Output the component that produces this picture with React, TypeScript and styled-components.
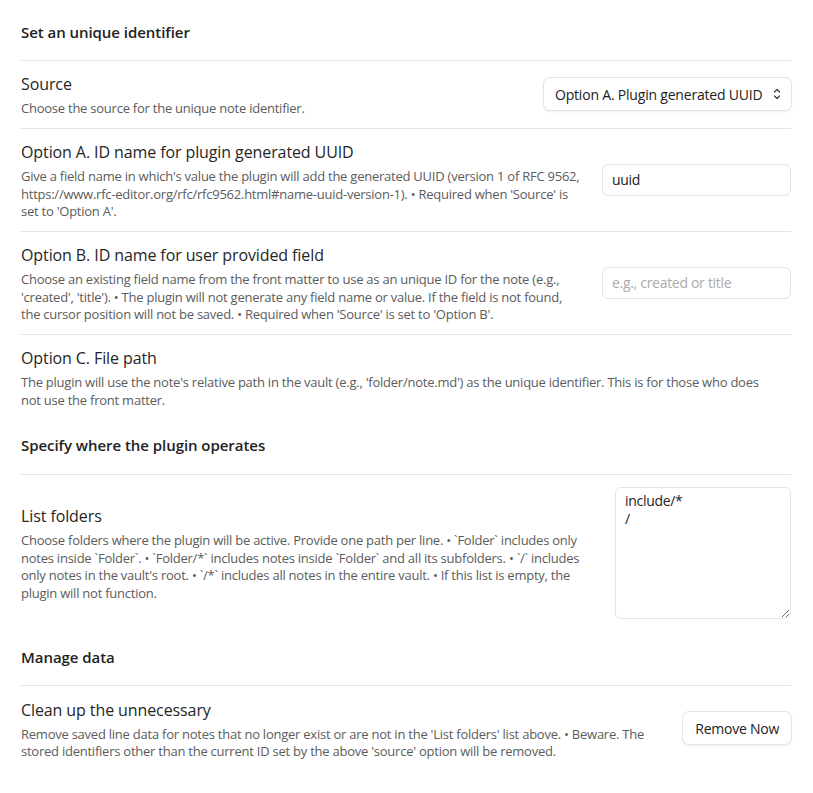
import React from "react";
import styled, { createGlobalStyle } from "styled-components";

const GlobalStyle = createGlobalStyle`
  html, body {
    margin: 0;
    padding: 0;
    background: #ffffff;
  }
  body {
    font-family: "Open Sans", "Noto Sans", "Liberation Sans", sans-serif;
    color: #222222;
    -webkit-font-smoothing: antialiased;
  }
  * { box-sizing: border-box; }
`;

const Page = styled.div`
  padding: 4px 22px 24px 21px;
  width: 813px;
`;

const Heading = styled.div<{ $first?: boolean }>`
  padding: ${(p) => (p.$first ? "18px 0 16px" : "16px 0 17px")};
  font-size: 15px;
  font-weight: 600;
  line-height: 21.5px;
  color: #222222;
  letter-spacing: -0.05px;
`;

const Row = styled.div`
  display: flex;
  align-items: center;
  padding: 12px 0;
  border-top: 1px solid #e3e3e3;
`;

const Info = styled.div<{ $full?: boolean }>`
  flex: 1 1 auto;
  min-width: 0;
  padding-top: 1.5px;
  margin-bottom: -2px;
  margin-right: ${(p) => (p.$full ? "0" : "20px")};
`;

const Name = styled.div`
  font-size: 16px;
  line-height: 21.5px;
  color: #262626;
  letter-spacing: -0.1px;
`;

const Desc = styled.div`
  padding-top: 4.5px;
  font-size: 13px;
  line-height: 17.5px;
  color: #5c5c5c;
  letter-spacing: -0.24px;
`;

const Line = styled.span`
  display: block;
  white-space: nowrap;
`;

const Control = styled.div`
  flex: 0 0 auto;
  display: flex;
  align-items: center;
  justify-content: flex-end;
`;

const SelectWrap = styled.div`
  position: relative;
  display: inline-flex;
`;

const Select = styled.select`
  appearance: none;
  -webkit-appearance: none;
  height: 32px;
  padding: 0 28px 0 11px;
  border: none;
  border-radius: 6px;
  background: #ffffff;
  color: #222222;
  font-family: inherit;
  font-size: 14px;
  letter-spacing: -0.2px;
  box-shadow: 0 0 0 1px #e4e4e4, 0 1px 2px rgba(0, 0, 0, 0.07),
    0 2px 4px rgba(0, 0, 0, 0.05);
  outline: none;
`;

const SelectArrow = styled.svg`
  position: absolute;
  right: 9px;
  top: 50%;
  transform: translateY(-50%);
  pointer-events: none;
`;

const TextInput = styled.input`
  width: 189px;
  height: 32px;
  padding: 0 9px;
  border: 1px solid #e3e3e3;
  border-radius: 6px;
  background: #ffffff;
  color: #222222;
  font-family: inherit;
  font-size: 14px;
  letter-spacing: -0.3px;
  outline: none;
  &::placeholder {
    color: #ababab;
  }
`;

const TextArea = styled.textarea`
  width: 176px;
  height: 132px;
  padding: 4px 9px;
  border: 1px solid #e3e3e3;
  border-radius: 6px;
  background: #ffffff;
  color: #222222;
  font-family: inherit;
  font-size: 14px;
  line-height: 18px;
  letter-spacing: -0.3px;
  outline: none;
  resize: both;
  display: block;
`;

const Button = styled.button`
  height: 32px;
  padding: 0 12px;
  border: none;
  border-radius: 6px;
  background: #ffffff;
  color: #222222;
  font-family: inherit;
  font-size: 14px;
  letter-spacing: -0.25px;
  cursor: pointer;
  box-shadow: 0 0 0 1px #e4e4e4, 0 1px 2px rgba(0, 0, 0, 0.07),
    0 2px 4px rgba(0, 0, 0, 0.05);
`;

type Setting = {
  name: string;
  lines: string[];
};

const Description = ({ lines }: { lines: string[] }) => (
  <Desc>
    {lines.map((l, i) => (
      <Line key={i}>{l}</Line>
    ))}
  </Desc>
);

const SettingInfo = ({ s, full }: { s: Setting; full?: boolean }) => (
  <Info $full={full}>
    <Name>{s.name}</Name>
    <Description lines={s.lines} />
  </Info>
);

const source: Setting = {
  name: "Source",
  lines: ["Choose the source for the unique note identifier."],
};

const optionA: Setting = {
  name: "Option A. ID name for plugin generated UUID",
  lines: [
    "Give a field name in which's value the plugin will add the generated UUID (version 1 of RFC 9562,",
    "https://www.rfc-editor.org/rfc/rfc9562.html#name-uuid-version-1). • Required when 'Source' is",
    "set to 'Option A'.",
  ],
};

const optionB: Setting = {
  name: "Option B. ID name for user provided field",
  lines: [
    "Choose an existing field name from the front matter to use as an unique ID for the note (e.g.,",
    "'created', 'title'). • The plugin will not generate any field name or value. If the field is not found,",
    "the cursor position will not be saved. • Required when 'Source' is set to 'Option B'.",
  ],
};

const optionC: Setting = {
  name: "Option C. File path",
  lines: [
    "The plugin will use the note's relative path in the vault (e.g., 'folder/note.md') as the unique identifier. This is for those who does",
    "not use the front matter.",
  ],
};

const listFolders: Setting = {
  name: "List folders",
  lines: [
    "Choose folders where the plugin will be active. Provide one path per line. • `Folder` includes only",
    "notes inside `Folder`. • `Folder/*` includes notes inside `Folder` and all its subfolders. • `/` includes",
    "only notes in the vault's root. • `/*` includes all notes in the entire vault. • If this list is empty, the",
    "plugin will not function.",
  ],
};

const cleanUp: Setting = {
  name: "Clean up the unnecessary",
  lines: [
    "Remove saved line data for notes that no longer exist or are not in the 'List folders' list above. • Beware. The",
    "stored identifiers other than the current ID set by the above 'source' option will be removed.",
  ],
};

export default function App() {
  return (
    <>
      <GlobalStyle />
      <Page>
        <Heading $first>Set an unique identifier</Heading>

        <Row>
          <SettingInfo s={source} />
          <Control>
            <SelectWrap>
              <Select defaultValue="a">
                <option value="a">Option A. Plugin generated UUID</option>
                <option value="b">Option B. User provided field</option>
                <option value="c">Option C. File path</option>
              </Select>
              <SelectArrow
                width="10"
                height="14"
                viewBox="0 0 10 14"
                fill="none"
                stroke="#3a3a3a"
                strokeWidth="1.2"
                strokeLinecap="round"
                strokeLinejoin="round"
              >
                <path d="M2.5 5 L5 2.5 L7.5 5" />
                <path d="M2.5 9 L5 11.5 L7.5 9" />
              </SelectArrow>
            </SelectWrap>
          </Control>
        </Row>

        <Row>
          <SettingInfo s={optionA} />
          <Control>
            <TextInput type="text" defaultValue="uuid" />
          </Control>
        </Row>

        <Row>
          <SettingInfo s={optionB} />
          <Control>
            <TextInput type="text" placeholder="e.g., created or title" />
          </Control>
        </Row>

        <Row>
          <SettingInfo s={optionC} full />
        </Row>

        <Heading>Specify where the plugin operates</Heading>

        <Row>
          <SettingInfo s={listFolders} />
          <Control>
            <TextArea defaultValue={"include/*\n/"} />
          </Control>
        </Row>

        <Heading>Manage data</Heading>

        <Row>
          <SettingInfo s={cleanUp} />
          <Control>
            <Button type="button">Remove Now</Button>
          </Control>
        </Row>
      </Page>
    </>
  );
}
